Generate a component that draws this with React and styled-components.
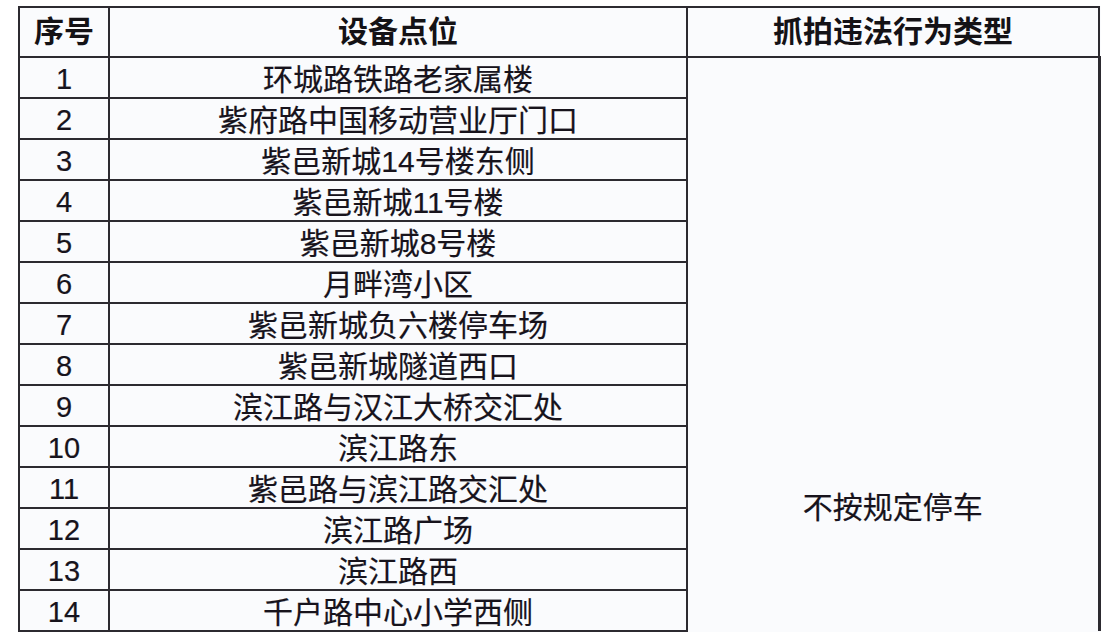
import React from 'react'
import styled, { createGlobalStyle } from 'styled-components'

const rows = [
  '环城路铁路老家属楼',
  '紫府路中国移动营业厅门口',
  '紫邑新城14号楼东侧',
  '紫邑新城11号楼',
  '紫邑新城8号楼',
  '月畔湾小区',
  '紫邑新城负六楼停车场',
  '紫邑新城隧道西口',
  '滨江路与汉江大桥交汇处',
  '滨江路东',
  '紫邑路与滨江路交汇处',
  '滨江路广场',
  '滨江路西',
  '千户路中心小学西侧',
]

const GlobalStyle = createGlobalStyle`
  html, body {
    margin: 0;
    padding: 0;
    background: #ffffff;
    overflow: hidden;
  }
  body {
    font-family: "Liberation Sans", "Noto Sans CJK SC", sans-serif;
  }
`

const Page = styled.div`
  width: 1118px;
  height: 632px;
  padding: 6px 0 0 18px;
  box-sizing: border-box;
  overflow: hidden;
`

const Table = styled.table`
  border-collapse: collapse;
  table-layout: fixed;
  width: 1080px;
  background: #fafbfd;
  color: #17131c;
`

const Col = styled.col`
  width: ${p => p.$w}px;
`

const HeadCell = styled.th`
  height: 48px;
  padding: 0;
  border: 2px solid #2c2a30;
  font-size: 30px;
  font-weight: 700;
  line-height: 1;
  text-align: center;
  vertical-align: middle;
  color: #141216;
`

const Cell = styled.td`
  height: 41px;
  padding: 4px 0 0;
  border: 2px solid #2c2a30;
  font-size: ${p => (p.$num ? '29px' : '30px')};
  line-height: 1;
  text-align: center;
  vertical-align: middle;
  white-space: nowrap;
  box-sizing: border-box;
  -webkit-text-stroke: 0.2px #17131c;
`

const MergedCell = styled.td`
  padding: 435px 0 0;
  border: 2px solid #2c2a30;
  border-bottom: none;
  border-right-width: 3px;
  font-size: 30px;
  line-height: 1;
  text-align: center;
  vertical-align: top;
  -webkit-text-stroke: 0.2px #17131c;
`

export default function App() {
  return (
    <>
      <GlobalStyle />
      <Page>
        <Table>
          <colgroup>
            <Col $w={90} />
            <Col $w={578} />
            <Col $w={412} />
          </colgroup>
          <thead>
            <tr>
              <HeadCell>序号</HeadCell>
              <HeadCell>设备点位</HeadCell>
              <HeadCell>抓拍违法行为类型</HeadCell>
            </tr>
          </thead>
          <tbody>
            {rows.map((name, i) => (
              <tr key={i}>
                <Cell $num>{i + 1}</Cell>
                <Cell>{name}</Cell>
                {i === 0 && <MergedCell rowSpan={rows.length}>不按规定停车</MergedCell>}
              </tr>
            ))}
          </tbody>
        </Table>
      </Page>
    </>
  )
}
